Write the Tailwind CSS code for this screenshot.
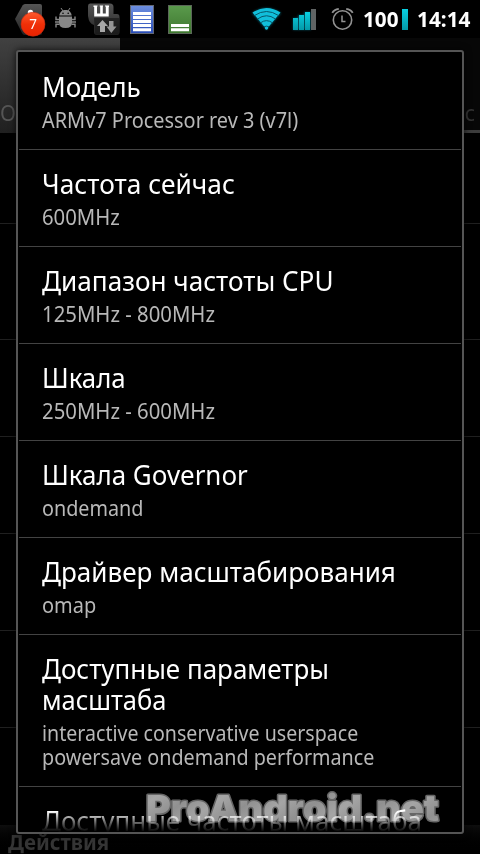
<!DOCTYPE html>
<html lang="ru"><head><meta charset="utf-8"><title>CPU</title>
<script src="https://cdn.jsdelivr.net/npm/@tailwindcss/browser@4"></script></head>
<body class="bg-black overflow-hidden">
<div class="relative w-[480px] h-[854px] overflow-hidden bg-black font-['Noto_Sans',sans-serif] text-white flex flex-col">
  <header class="h-[38px] shrink-0 bg-black">
    <svg class="block" width="480" height="38" viewBox="0 0 480 38">
      <defs>
        <linearGradient id="red" x1="0" y1="0" x2="0" y2="1"><stop stop-color="#ff5a2d"/><stop offset=".5" stop-color="#f03008"/><stop offset="1" stop-color="#ea2200"/></linearGradient>
        <linearGradient id="blue" x1="0" y1="0" x2="0" y2="1"><stop stop-color="#6d8fe0"/><stop offset="1" stop-color="#294cb6"/></linearGradient>
        <linearGradient id="green" x1="0" y1="0" x2="0" y2="1"><stop stop-color="#5a9a4c"/><stop offset="1" stop-color="#3f7830"/></linearGradient>
        <linearGradient id="gray" x1="0" y1="0" x2="0" y2="1"><stop stop-color="#555"/><stop offset="1" stop-color="#222"/></linearGradient>
        <linearGradient id="cyan" x1="0" y1="0" x2="0" y2="1"><stop stop-color="#08d0e2"/><stop offset="1" stop-color="#0499a8"/></linearGradient>
        <filter id="glow" x="-30%" y="-30%" width="160%" height="160%"><feGaussianBlur stdDeviation="1.3"/></filter>
      </defs>
      <path d="M15 19 L22.500 5.500 Q23.500 4 25 4 H40 Q42 4 42 6 V33 Q42 35 40 35 H25 Q23 35 22 33Z" fill="url(#gray)"/>
      <circle cx="30.500" cy="12.500" r="2.700" fill="#fff"/>
      <circle cx="33" cy="24.200" r="12" fill="url(#red)" stroke="#c22a10" stroke-width=".6"/>
      <text x="33" y="29" font-size="13.500" text-anchor="middle" fill="#fff" font-family="Noto Sans">7</text>
      <g fill="#888">
        <path d="M59.300 15.500C59.800 11.800 62.300 10 65.500 10S71.200 11.800 71.700 15.500Z"/>
        <path d="M61 8L63 11M70 8L68 11" stroke="#888"/>
        <path d="M59 16.500H72V22.500Q72 28 65.500 28T59 22.500Z"/>
        <path d="M59.500 19.500H56V16.500M59.500 22H55M59.500 24.200H56V27.500M71.500 19.500H75V16.500M71.500 22H76M71.500 24.200H75V27.500" fill="none" stroke="#888" stroke-width="1.400"/>
        <circle cx="63" cy="13.300" r=".8" fill="#000"/><circle cx="68.200" cy="13.300" r=".8" fill="#000"/>
      </g>
      <path d="M90 3.500H110Q113.500 3.500 113.500 7V14H117Q119.500 14 119.500 17V32Q119.500 35 117 35H97Q94 35 94 32V25Q89 24 88 16V6Q88 3.500 90 3.500Z" fill="url(#gray)"/>
      <path d="M94 18H119V33Q119 34.500 117 34.500H97Q95 34.500 95 32Z" fill="#161616" opacity=".65"/>
      <path d="M93.500 5.500H97.500V6.500H97V13.500H100.200V6.500H99.700V5.500H103V6.500H102.800V13.500H105.800V6.500H105V5.500H109V7H108.700V16.500H94.200V7H93.500Z" fill="#fff"/>
      <path d="M102.500 20L108 26H105V32H100V26H97Z" fill="#a8a8a8"/><path d="M109 21H113.500V26.500H116.500L111.300 33L106.500 26.500H109Z" fill="#969696"/>
      <rect x="130.500" y="5.500" width="23" height="28" fill="url(#blue)" stroke="#626875"/>
      <path d="M133 13.500H151M133 17.500H151M133 21.500H151M133 25.500H151M133 29.800H151" stroke="#fff" stroke-width="3"/>
      <rect x="168.500" y="5.500" width="23" height="28" fill="url(#green)" stroke="#5b6658"/>
      <path d="M171 25.500H189M171 29.800H189" stroke="#fff" stroke-width="3"/>
      <path d="M252 13Q266.500 3 281 13L266.500 30Z" fill="#067f98" opacity=".65" filter="url(#glow)"/>
      <path d="M252.500 12.500Q266.500 3.500 280.500 12.500L268 27.500A1.600 1.600 0 1 1 265 27.500Z" fill="#11bfdb"/>
      <path d="M254.500 15.500Q266.500 7.500 278.500 15.500M257.500 19Q266.500 12.500 275.500 19M260.500 22.800Q266.500 18.500 272.500 22.800M264 26.800Q266.500 25.500 269 26.800" stroke="#07586b" stroke-width="1" fill="none"/>
      <path d="M293 18h5v-3h6v-3h7v18h-18Z" fill="#067f98" opacity=".6" filter="url(#glow)"/>
      <path d="M293 18h5v12h-5ZM299 15h5v15h-5ZM305 12h5v18h-5Z" fill="url(#cyan)"/><rect x="311" y="9" width="5" height="21" fill="#606464"/>
      <g fill="none" stroke="#929292"><circle cx="342.500" cy="20" r="9.200" stroke-width="1.600"/><path d="M332.300 12.800Q334 9.500 338.800 8.800M346.200 8.800Q351 9.500 352.700 12.800" stroke-width="1.800"/><path d="M342 15.500V21.500H345.500" stroke-width="1.500"/></g>
      <g font-family="Noto Sans" font-weight="700" font-size="20.500" fill="#fff"><text x="363" y="27" textLength="35.500" lengthAdjust="spacingAndGlyphs">100</text><text x="417" y="27" textLength="53.500" lengthAdjust="spacingAndGlyphs">14:14</text></g>
      <rect x="402" y="9" width="6" height="21" fill="url(#cyan)"/>
    </svg>
  </header>
  <main class="flex h-[816px] flex-col" aria-hidden="true">
    <div class="flex h-[95px] shrink-0 text-[21px]">
      <div class="flex w-[120px] items-end bg-gradient-to-b from-[#414141] to-[#202020] text-[#555] pb-[5px] leading-[30px]">О</div>
      <div class="flex grow items-end justify-end border-b-[3px] border-[#3c3c3c] bg-[#070707] pr-[5px] pb-[2px] leading-[30px] text-[#333]">ос</div>
    </div>
    <div class="h-[91px] shrink-0 border-b border-[#202020]"></div>
    <div class="h-[116px] shrink-0 border-b border-[#202020]"></div>
    <div class="h-[97px] shrink-0 border-b border-[#202020]"></div>
    <div class="h-[97px] shrink-0 border-b border-[#202020]"></div>
    <div class="h-[97px] shrink-0 border-b border-[#202020]"></div>
    <div class="h-[97px] shrink-0 border-b border-[#202020]"></div>
    <div class="h-[97px] shrink-0"></div>
    <div class="h-[29px] shrink-0 bg-gradient-to-b from-[#0e0e0e] to-black pl-2 pt-[4px] text-[20.5px] leading-[27px] font-bold text-[#353535]">Действия</div>
  </main>
  <section class="absolute left-4 top-[50px] h-[784px] w-[448px] overflow-hidden rounded-[3px] border-2 border-[#555] bg-black pt-px px-px shadow-[0_0_7px_rgba(0,0,0,0.8)] text-[27px] leading-[31px] [&_p]:mt-1.5 [&_p]:text-[21px] [&_p]:leading-6 [&_p]:text-[#b8b8b8] [&_article]:border-b [&_article]:border-[#434343] [&_article]:px-[23px] [&_article]:pt-[18px] [&_article]:pb-[17px] [&_span]:block [&_span]:w-fit [&_span]:origin-left whitespace-nowrap">
    <article><h2><span class="scale-x-[0.968]">Модель</span></h2><p><span class="scale-x-[0.948]">ARMv7 Processor rev 3 (v7l)</span></p></article>
    <article><h2><span class="scale-x-[0.974]">Частота сейчас</span></h2><p><span class="scale-x-[0.967]">600MHz</span></p></article>
    <article><h2><span class="scale-x-[0.968]">Диапазон частоты CPU</span></h2><p><span class="scale-x-[0.968]">125MHz - 800MHz</span></p></article>
    <article><h2><span class="scale-x-[0.955]">Шкала</span></h2><p><span class="scale-x-[0.968]">250MHz - 600MHz</span></p></article>
    <article><h2><span class="scale-x-[0.96]">Шкала Governor</span></h2><p><span class="scale-x-[0.942]">ondemand</span></p></article>
    <article><h2><span class="scale-x-[0.965]">Драйвер масштабирования</span></h2><p><span class="scale-x-[0.95]">omap</span></p></article>
    <article><h2><span class="scale-x-[0.962]">Доступные параметры</span><span class="scale-x-[0.943]">масштаба</span></h2><p><span class="scale-x-[0.933]">interactive conservative userspace</span><span class="scale-x-[0.94]">powersave ondemand performance</span></p></article>
    <div class="h-[45px] overflow-hidden px-[23px] pt-[18px]"><h2><span class="scale-x-[0.962] bg-gradient-to-b from-white from-20% to-black to-95% bg-clip-text text-transparent">Доступные частоты масштаба</span></h2></div>
  </section>
  <svg class="absolute left-[140px] top-[784px] mix-blend-screen" width="306" height="50" viewBox="0 0 306 50">
    <defs><filter id="soft" x="-5%" y="-20%" width="110%" height="140%"><feGaussianBlur stdDeviation=".7"/></filter>
    <linearGradient id="metal" x1="0" y1="0" x2="12" y2="16" gradientUnits="userSpaceOnUse" spreadMethod="reflect"><stop stop-color="#909090"/><stop offset="1" stop-color="#a5a5a5"/></linearGradient></defs>
    <g font-family="Inter" font-weight="900" font-size="36">
      <text x="6" y="37" textLength="293" lengthAdjust="spacingAndGlyphs" fill="#777" stroke="#666" stroke-width="3" stroke-linejoin="round" filter="url(#soft)" aria-hidden="true">ProAndroid.net</text>
      <text x="6" y="37" textLength="293" lengthAdjust="spacingAndGlyphs" fill="url(#metal)">ProAndroid.net</text>
    </g>
  </svg>
</div>
</body></html>
